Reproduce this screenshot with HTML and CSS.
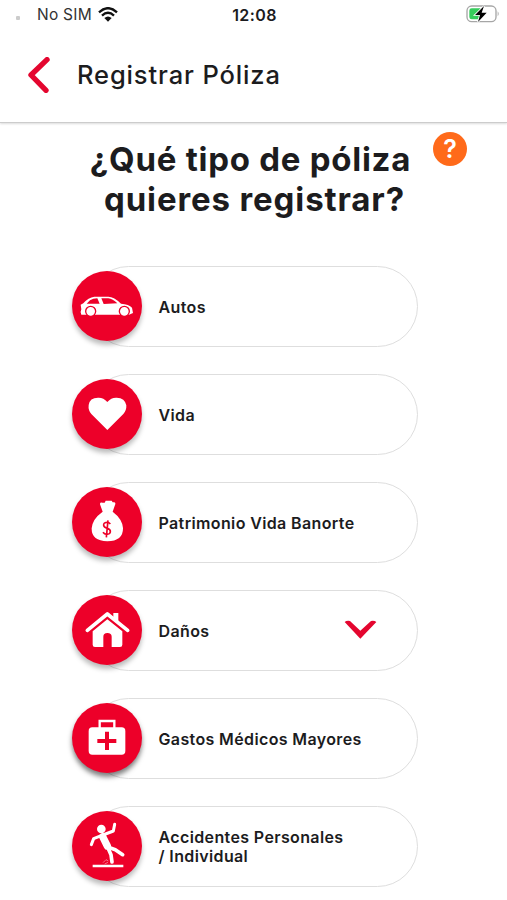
FILE: index.html
```html
<!DOCTYPE html>
<html lang="es">
<head>
<meta charset="utf-8">
<title>Registrar Póliza</title>
<link rel="stylesheet" href="styles.css">
</head>
<body>
<div class="screen">
  <header class="header">
    <div class="status">
      <div class="carrier">
        <span class="signal"></span>
        <span class="sim">No SIM</span>
        <svg class="wifi" viewBox="0 0 60 45"><g fill="none" stroke="#111" stroke-width="7"><path d="M3 16Q30-9 57 16"/><path d="M12 26Q30 9 48 26"/></g><path d="M19 33Q30 24 41 33L30 44Z" fill="#111"/></svg>
      </div>
      <time class="clock">12:08</time>
      <svg class="battery" viewBox="0 0 102 54"><rect x="3" y="3" width="87" height="47" rx="14" fill="#fff" stroke="#a6a6a6" stroke-width="4"/><path d="M17 10H44V43H17Q10 43 10 36V17Q10 10 17 10Z" fill="#35cc5b"/><path d="M95 19Q101 27 95 34Z" fill="#a6a6a6"/><path d="M54 3L27 30H42L36 51L62 23H47Z" fill="#000" stroke="#fff" stroke-width="5" paint-order="stroke"/></svg>
    </div>
    <div class="nav">
      <svg class="back" viewBox="0 0 66 108"><path d="M57 8L9 54L54 100" fill="none" stroke="#e4062f" stroke-width="16" stroke-linecap="round" stroke-linejoin="round"/></svg>
      <h1 class="title">Registrar Póliza</h1>
    </div>
  </header>
  <main class="content">
    <div class="intro">
      <h2 class="question"><span class="line">¿Qué tipo de póliza</span><span class="line line-last">quieres registrar?</span></h2>
      <span class="help">?</span>
    </div>
    <div class="options">
      <div class="option">
        <svg class="icon" viewBox="36 48 210 210"><path d="M62 149L70 145Q85 127 103 125H145Q162 125 183 146Q207 148 216 158L219 174L207 179H64Q60 170 64 163Z" fill="#fff"/><path d="M80 146L90 136Q99 130 112 130L119 146ZM124 130H145Q158 131 172 145L131 147Z" fill="#ed0029"/><g fill="#fff" stroke="#ed0029" stroke-width="4"><circle cx="92" cy="169" r="15"/><circle cx="193" cy="169" r="15"/></g></svg>
        <span class="label">Autos</span>
      </div>
      <div class="option">
        <svg class="icon" viewBox="36 42 210 210"><path d="M142 195L94 147Q84 136 86 120Q89 98 114 98Q130 97 142 111Q154 97 170 98Q195 99 199 121Q200 136 190 147Z" fill="#fff"/></svg>
        <span class="label">Vida</span>
      </div>
      <div class="option">
        <svg class="icon" viewBox="36 36 210 210"><path d="M128 110L120 88Q119 82 127 83L134 83L137 77H155L158 82H163Q168 83 165 90L158 110Q187 132 189 159Q190 198 142 199Q94 198 95 160Q97 132 128 110Z" fill="#fff"/><path d="M151 147Q146 141 140 142Q130 143 131 151Q132 157 142 160Q152 163 151 171Q150 178 140 178Q133 178 129 172M144 136L139 187" fill="none" stroke="#ed0029" stroke-width="5"/></svg>
        <span class="label">Patrimonio Vida Banorte</span>
      </div>
      <div class="option">
        <svg class="icon" viewBox="36 45 210 210"><path d="M82 151L142 102L203 151" fill="none" stroke="#fff" stroke-width="11" stroke-linecap="round" stroke-linejoin="round"/><path d="M160 99H175V128L160 116ZM98 154L142 118L187 154V194Q187 201 180 201H155V170Q155 159 142 159Q130 159 130 170V201H105Q98 201 98 194Z" fill="#fff"/></svg>
        <span class="label">Daños</span>
        <svg class="chevron" viewBox="0 0 99 57"><path d="M2 6Q8 1 18 3L49 32L81 3Q91 1 97 6L49 56Z" fill="#e4062f"/></svg>
      </div>
      <div class="option option-deep">
        <svg class="icon" viewBox="36 39 210 210"><path d="M119 114V93H163V114" fill="none" stroke="#fff" stroke-width="7"/><rect x="86" y="112" width="110" height="82" rx="11" fill="#fff"/><path d="M141 125V180M112 153H169" stroke="#ed0029" stroke-width="12"/></svg>
        <span class="label">Gastos Médicos Mayores</span>
      </div>
      <div class="option">
        <svg class="icon" viewBox="36 48 210 210"><circle cx="124" cy="102" r="13" fill="#fff"/><g fill="none" stroke="#fff" stroke-linecap="round" stroke-linejoin="round"><path d="M129 120L160 108L164 88" stroke-width="9"/><path d="M118 124L101 131L94 149" stroke-width="9"/><path d="M128 125L142 153" stroke-width="22"/><path d="M145 157L166 164L188 179" stroke-width="11"/><path d="M143 157L153 179L156 201" stroke-width="11"/></g><path d="M98 209H190V217H98Z" fill="#fff"/><path d="M129 203L138 194L145 198M134 207L144 202" fill="none" stroke="#fff" stroke-width="2" opacity=".65"/></svg>
        <span class="label">Accidentes Personales<br>/ Individual</span>
      </div>
    </div>
  </main>
</div>
</body>
</html>
```
FILE: styles.css
```css
* { box-sizing: border-box; }
body {
  margin: 0;
  background: #fff;
  color: #1c1c1e;
  font-family: Inter, "Liberation Sans", sans-serif;
}
.screen { width: 507px; height: 900px; overflow: hidden; }
.header {
  height: 123px;
  border-bottom: 1px solid #ccc;
  box-shadow: 0 1px 2px rgba(0, 0, 0, .14);
}
.status {
  display: grid;
  grid-template-columns: 1fr auto 1fr;
  align-items: center;
  height: 29px;
  padding: 0 7px 0 16px;
}
.carrier { display: flex; align-items: center; }
.signal { width: 4px; height: 4px; margin: 7px 17px 0 0; background: #ccc; border-radius: 1px; }
.sim { font-size: 15.5px; letter-spacing: .25px; color: #333; }
.wifi { width: 20px; height: 15px; margin-left: 6px; }
.clock { font-size: 16px; font-weight: 600; letter-spacing: .4px; margin-right: 7px; }
.battery { width: 34px; height: 18px; justify-self: end; margin-top: -1px; }
.nav { display: flex; align-items: center; height: 92px; padding-left: 28px; }
.back { width: 22px; height: 36px; }
.title { margin: 0 0 0 27px; font-size: 25.5px; line-height: 30px; font-weight: 500; letter-spacing: .87px; }
.intro { position: relative; padding-top: 16px; }
.question {
  margin: 0 6px 0 0;
  text-align: center;
  font-size: 33px;
  line-height: 40px;
  font-weight: 700;
  letter-spacing: .74px;
}
.line { display: block; }
.line-last { padding-left: 8px; letter-spacing: .88px; }
.help {
  position: absolute;
  left: 433px;
  top: 9px;
  width: 34px;
  height: 34px;
  border-radius: 50%;
  background: #ff6a1a;
  color: #fff;
  font-size: 25px;
  font-weight: 600;
  line-height: 34px;
  text-align: center;
}
.options { display: grid; gap: 27px; margin: 47px 89px 0 88px; }
.option {
  display: flex;
  align-items: center;
  height: 81px;
  border: 1px solid #dedede;
  border-radius: 41px;
}
.icon {
  flex: none;
  width: 70px;
  height: 70px;
  margin: -2px 0 0 -17px;
  border-radius: 50%;
  background: #ed0029;
  box-shadow: 0 4px 5px rgba(0, 0, 0, .27);
}
.option-deep .icon { box-shadow: 0 4px 5px rgba(0, 0, 0, .5); }
.label { flex: 1; margin: 1px 0 0 16.5px; font-size: 16px; line-height: 19px; font-weight: 600; letter-spacing: .37px; }
.chevron { width: 33px; height: 19px; margin: -2px 40px 0 0; }
```
